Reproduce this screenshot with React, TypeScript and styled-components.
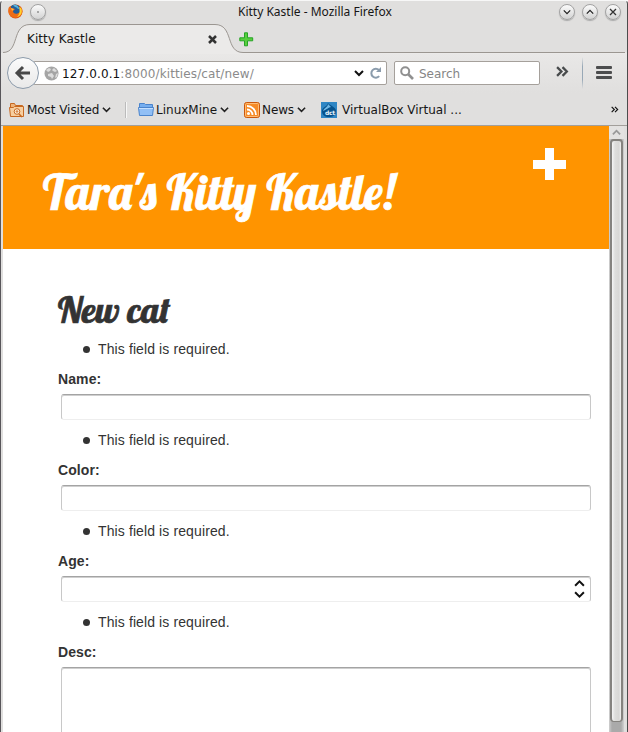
import React from 'react';
import styled, { createGlobalStyle } from 'styled-components';

const GlobalStyle = createGlobalStyle`
  * { box-sizing: border-box; }
  body { margin: 0; background: #fff; overflow: hidden; }
`;

const Window = styled.div`
  width: 628px;
  height: 732px;
  display: flex;
  flex-direction: column;
  overflow: hidden;
  background: #e0dfde;
  border-left: 1px solid #58565a;
  border-right: 1px solid #4c4c4c;
  border-top: 1px solid #f7f7f7;
  border-radius: 4px 4px 0 0;
  font: 12px 'DejaVu Sans', sans-serif;
  color: #161616;
`;

const TitleBar = styled.header`
  height: 22px;
  flex: none;
  display: grid;
  grid-template-columns: 22px 180px 1fr 66px;
  align-items: center;
  padding: 0 2px 2px 7px;
`;

const WindowTitle = styled.div`
  grid-column: 3;
  padding: 1px 0 0 28px;
  font: 12px/20px 'Noto Sans', sans-serif;
  white-space: nowrap;
`;

const WindowButtons = styled.div`
  display: flex;
  gap: 7px;
  grid-column: 4;
`;

const RoundButton = styled.button`
  width: 16px;
  height: 16px;
  padding: 0;
  display: grid;
  place-items: center;
  border: 1px solid #a2a2a2;
  border-radius: 50%;
  background: linear-gradient(#fbfbfb, #d3d3d3);
  box-shadow: 0 1px 1px #aaa;
`;

const TabStrip = styled.nav`
  height: 30px;
  flex: none;
  display: flex;
  position: relative;
`;

const TabOutline = styled.svg`
  position: absolute;
  left: 0;
  top: 0;
`;

const Tab = styled.div`
  width: 236px;
  position: relative;
  padding: 9px 20px 0 26px;
  display: flex;
  justify-content: space-between;
  line-height: 15px;
`;

const TabLabel = styled.span<{ $spacing: number }>`
  letter-spacing: ${p => p.$spacing}px;
`;

const CloseIcon = styled.svg`
  margin-top: 3px;
`;

const AddIcon = styled.svg`
  position: relative;
  margin: 9px 0 0 2px;
`;

const Toolbar = styled.div`
  height: 40px;
  flex: none;
  display: flex;
  align-items: center;
  padding: 0 14px 0 6px;
  background: linear-gradient(#e9e8e7, #e0dfde);
`;

const BackButton = styled.button`
  position: relative;
  z-index: 1;
  flex: none;
  width: 32px;
  height: 32px;
  padding: 0;
  display: grid;
  place-items: center;
  border: 1px solid #8c9bab;
  border-radius: 50%;
  background: linear-gradient(#fbfbfb, #e9e9e9);
`;

const InputBox = styled.div<{ $width: number; $joined?: boolean }>`
  width: ${p => p.$width}px;
  height: 24px;
  flex: none;
  display: flex;
  align-items: center;
  background: #fff;
  border: 1px solid #a5a09b;
  border-radius: 2px;
  margin-left: ${p => (p.$joined ? -6 : 7)}px;
  padding-left: ${p => (p.$joined ? 10 : 5)}px;
  padding-right: 4px;
`;

const Address = styled.div`
  flex: 1;
  margin: 2px 0 0 3px;
  letter-spacing: 0.12px;
  color: #8b8b8b;
`;

const Host = styled.span`
  color: #111;
`;

const Placeholder = styled.span`
  color: #858585;
  margin: 2px 0 0 5px;
`;

const ToolbarIcon = styled.svg<{ $left?: number }>`
  flex: none;
  margin-left: ${p => p.$left ?? 0}px;
`;

const ToolbarRule = styled.div`
  width: 1px;
  height: 32px;
  margin: 0 13px 0 13px;
  background: linear-gradient(transparent, #98a8b6 30%, #98a8b6 70%, transparent);
`;

const Bookmarks = styled.div`
  height: 33px;
  flex: none;
  display: flex;
  align-items: center;
  padding: 1px 8px 0 8px;
  border-bottom: 1px solid #a29f9b;
`;

const Bookmark = styled.div<{ $width: number }>`
  width: ${p => p.$width}px;
  flex: none;
  display: flex;
  align-items: center;
  white-space: nowrap;
`;

const BookmarkText = styled.span<{ $gap: number; $spacing: number }>`
  margin-left: ${p => p.$gap}px;
  letter-spacing: ${p => p.$spacing}px;
`;

const BookmarkRule = styled.div`
  width: 2px;
  height: 16px;
  border-left: 1px solid #bbb;
  border-right: 1px solid #f7f7f7;
  margin-right: 11px;
`;

const Viewport = styled.div`
  display: flex;
  flex: 1;
  min-height: 0;
  padding: 0 2px;
`;

const Page = styled.main`
  width: 606px;
  background: #fff;
  overflow: hidden;
  color: #333;
  font: 14px/20px 'Liberation Sans', sans-serif;
`;

const Banner = styled.div`
  height: 123px;
  display: flex;
  justify-content: space-between;
  background: #ff9400;
  padding: 22px 43px 0 40px;
`;

const Lettering = styled.h1<{ $size: number }>`
  margin: 0;
  font: 400 ${p => p.$size}px/1.1 Lobster, 'Liberation Serif', serif;
  -webkit-text-stroke: 0.7px currentColor;
  white-space: nowrap;
`;

const BannerTitle = styled(Lettering)`
  padding-top: 18px;
  color: #fff;
`;

const Form = styled.form`
  padding: 40px 18px 0 55px;
`;

const FormTitle = styled(Lettering)`
  height: 50px;
  padding-top: 1px;
`;

const ErrorList = styled.ul`
  margin: 0;
  padding-left: 25px;
  list-style: none;
`;

const ErrorItem = styled.li`
  display: flex;
  align-items: center;
  gap: 8px;
  letter-spacing: 0.11px;

  &::before {
    content: '';
    width: 7px;
    height: 7px;
    border-radius: 50%;
    background: #333;
  }
`;

const Label = styled.label`
  display: block;
  margin: 10px 0 5px;
  font-weight: 700;
  letter-spacing: 0.1px;
`;

const Field = styled.div<{ $height: number }>`
  width: 530px;
  height: ${p => p.$height}px;
  margin: 0 0 10px 3px;
  border: 1px solid #c8c8c8;
  border-top: 1px solid #a4a4a4;
  border-bottom-color: #eee;
  box-shadow: inset 0 1px #cfcfcf;
  border-radius: 3px;
  display: flex;
  justify-content: flex-end;
  align-items: center;
  padding-right: 5px;
`;

const Scrollbar = styled.aside`
  width: 15px;
  display: flex;
  flex-direction: column;
  align-items: center;
  background: linear-gradient(90deg, #d0d0d0, #aaa 3px, #aaa 12px, #d0d0d0);
`;

const ScrollArrow = styled.div`
  width: 100%;
  height: 13px;
  display: grid;
  place-items: center;
  background: #e3e2e1;
`;

const Thumb = styled.div`
  width: 13px;
  height: 583px;
  border: 2px solid #85837f;
  border-bottom-width: 1px;
  border-radius: 4px;
  background: linear-gradient(90deg, #f5f5f5, #dededc 3px, #d8d7d5 7px, #f0f0f0);
`;

function Chevron({ up = false, size = 9, color = '#222', weight = 1.8 }: {
  up?: boolean; size?: number; color?: string; weight?: number;
}) {
  return (
    <svg width={size} height={size} viewBox="0 0 10 10" fill="none" stroke={color} strokeWidth={weight}>
      <path d={up ? 'M1 7l4-4 4 4' : 'M1 3l4 4 4-4'} />
    </svg>
  );
}

function FirefoxIcon() {
  return (
    <svg width="15" height="15" viewBox="0 0 15 15">
      <circle cx="7.5" cy="7.5" r="7" fill="#d9520e" />
      <circle cx="7" cy="5.8" r="5.4" fill="#245e99" />
      <path d="M5 1c3-1 6 1 6 4-2 0-2-2-4-2z" fill="#55b6df" />
      <path d="M1 3l2-1v2l4 1-2 2c0 3 4 4 7 1l1-5c2 3 2 7-1 9-4 3-9 2-11-2-1-3-1-5 0-7z" fill="#ef6d16" />
      <path d="M11 3l2 1c2 4 0 8-4 9 3-3 3-6 2-10z" fill="#ffd12d" />
      <path d="M3 4l3 1-2 2z" fill="#ffbb43" />
    </svg>
  );
}

function GlobeIcon() {
  return (
    <svg width="15" height="15" viewBox="0 0 15 15">
      <circle cx="7.5" cy="7.5" r="7" fill="#a5a5a5" />
      <path d="M2 4l3-2 2 1-1 2-2 1zM8 4l2-2 3 3-2 1-2-1zM4 8l4-1 2 3-2 3-1-2-3-1zM12 8l2-1-1 4-2 1z" fill="#ddd" />
    </svg>
  );
}

function FolderIcon({ visited = false }: { visited?: boolean }) {
  if (visited) {
    return (
      <svg width="16" height="16" viewBox="0 0 16 16" fill="none" stroke="#c76820">
        <path d="M1.5 11V1.5h4l1 2h7v3" fill="#efb47a" />
        <path d="M.5 5.5h4l1-1h9v10h-13z" fill="#f7cfa0" />
        <circle cx="8" cy="9.5" r="2.8" fill="#fff2df" />
        <circle cx="8" cy="9.5" r=".8" />
        <path d="M10 12l3 3" strokeWidth="1.5" />
      </svg>
    );
  }
  return (
    <svg width="16" height="16" viewBox="0 0 16 16" fill="none" stroke="#4b84cc">
      <path d="M1.5 8V1.5h5l1 1h7V8" fill="#75aef0" />
      <path d="M.5 5.5h15l-1 8h-13z" fill="#91bff5" />
      <path d="M1 6.5h14" stroke="#c5e0ff" />
    </svg>
  );
}

function FeedIcon() {
  return (
    <svg width="16" height="16" viewBox="0 0 16 16">
      <rect x=".5" y=".5" width="15" height="15" rx="2" fill="#f68b27" stroke="#ca570b" />
      <rect x="1.5" y="1.5" width="13" height="13" rx="1" fill="none" stroke="#ffbc75" />
      <circle cx="4.5" cy="11.5" r="1.5" fill="#fff" />
      <path d="M3 7.5a5.5 5.5 0 0 1 5.5 5.5M3 4a9 9 0 0 1 9 9" fill="none" stroke="#fff" strokeWidth="1.8" />
    </svg>
  );
}

const BadgeText = styled.text`
  font: 700 6px 'DejaVu Sans', sans-serif;
  fill: #e8f4fc;
`;

function DctIcon() {
  return (
    <svg width="16" height="16" viewBox="0 0 16 16">
      <path fill="#2e86c4" d="M0 0h16v16H0z" />
      <path d="M7 1c1 2 8 4 8 8 0 4-3 6-7 6s-7-2-7-6c0-4 5-4 6-8z" fill="#07538d" />
      <path d="M7 2c0 3-4 4-5 7 3-1 6-4 8-4z" fill="#70b9e7" />
      <BadgeText x="4" y="13" textLength="10">dct</BadgeText>
    </svg>
  );
}

function DoubleChevron({ size, color = '#484b4c' }: { size: number; color?: string }) {
  return (
    <svg width={size} height={size} viewBox="0 0 12 12" fill="none" stroke={color} strokeWidth={size > 10 ? 2.1 : 1.7}>
      <path d="M1 2l4 4-4 4M6 2l4 4-4 4" />
    </svg>
  );
}

const fields = [
  { label: 'Name:', height: 26 },
  { label: 'Color:', height: 26 },
  { label: 'Age:', height: 26, stepper: true },
  { label: 'Desc:', height: 100 },
];

const Stepper = styled.div`
  display: flex;
  flex-direction: column;
`;

export default function App() {
  return (
    <>
      <GlobalStyle />
      <Window>
        <TitleBar>
          <FirefoxIcon />
          <RoundButton><svg width="2" height="2"><circle cx="1" cy="1" r=".8" fill="#555" /></svg></RoundButton>
          <WindowTitle>Kitty Kastle - Mozilla Firefox</WindowTitle>
          <WindowButtons>
            <RoundButton><Chevron size={8} weight={1.6} /></RoundButton>
            <RoundButton><Chevron size={8} weight={1.6} up /></RoundButton>
            <RoundButton><svg width="8" height="8" stroke="#333" strokeWidth="1.3"><path d="M1 1l6 6M7 1L1 7" /></svg></RoundButton>
          </WindowButtons>
        </TitleBar>
        <TabStrip>
          <TabOutline width="626" height="31" viewBox="0 0 626 31" fill="none">
            <path d="M2 29.5C19 29.5 10 1.5 29 1.5h185c19 0 10 28 28 28h384V31H2z" fill="#ebeae9" />
            <path d="M2 29.5C19 29.5 10 1.5 29 1.5h185c19 0 10 28 28 28h382" stroke="#9b9691" />
          </TabOutline>
          <Tab>
            <TabLabel $spacing={0.03}>Kitty Kastle</TabLabel>
            <CloseIcon width="9" height="9" viewBox="0 0 9 9" stroke="#333" strokeWidth="2.5"><path d="M1 1l7 7M8 1L1 8" /></CloseIcon>
          </Tab>
          <AddIcon width="15" height="15" viewBox="0 0 15 15"><path d="M5.5.8h3v5h5.2v3H8.5v5h-3v-5H.8v-3h4.7z" fill="#58ce3f" stroke="#25a425" /></AddIcon>
        </TabStrip>
        <Toolbar>
          <BackButton><svg width="18" height="18" fill="none" stroke="#484848" strokeWidth="3"><path d="M9 3L3 9l6 6M4 9h12" /></svg></BackButton>
          <InputBox $width={354} $joined>
            <GlobeIcon />
            <Address><Host>127.0.0.1</Host>:8000/kitties/cat/new/</Address>
            <Chevron size={10} color="#111" weight={2} />
            <ToolbarIcon $left={6} width="12" height="12" fill="none" stroke="#8b9cac" strokeWidth="2"><path d="M9.2 9.2A4.5 4.5 0 1 1 9 3" /><path d="M11 0v5H6z" fill="#8b9cac" stroke="none" /></ToolbarIcon>
          </InputBox>
          <InputBox $width={146}>
            <svg width="14" height="14" fill="none" stroke="#909090" strokeWidth="2"><circle cx="5.2" cy="5.2" r="4" /><path d="M8 8l5 5" strokeWidth="2.6" /></svg>
            <Placeholder>Search</Placeholder>
          </InputBox>
          <ToolbarIcon as="span" $left={16}><DoubleChevron size={13} /></ToolbarIcon>
          <ToolbarRule />
          <svg width="16" height="14" fill="#4c4d4e"><rect width="16" height="3" rx="1" /><rect y="5" width="16" height="3" rx="1" /><rect y="10" width="16" height="3" rx="1" /></svg>
        </Toolbar>
        <Bookmarks>
          <Bookmark $width={116}><FolderIcon visited /><BookmarkText $gap={2} $spacing={-0.05}>Most Visited</BookmarkText><ToolbarIcon as="span" $left={3}><Chevron /></ToolbarIcon></Bookmark>
          <BookmarkRule />
          <Bookmark $width={106}><FolderIcon /><BookmarkText $gap={2} $spacing={0}>LinuxMine</BookmarkText><ToolbarIcon as="span" $left={3}><Chevron /></ToolbarIcon></Bookmark>
          <Bookmark $width={77}><FeedIcon /><BookmarkText $gap={2} $spacing={-0.1}>News</BookmarkText><ToolbarIcon as="span" $left={3}><Chevron /></ToolbarIcon></Bookmark>
          <Bookmark $width={290}><DctIcon /><BookmarkText $gap={5} $spacing={0}>VirtualBox Virtual ...</BookmarkText></Bookmark>
          <DoubleChevron size={9} color="#111" />
        </Bookmarks>
        <Viewport>
          <Page>
            <Banner>
              <BannerTitle $size={48}>Tara's Kitty Kastle!</BannerTitle>
              <svg width="33" height="32" fill="#fff"><path d="M12 0h9v12h12v9H21v11h-9V21H0v-9h12z" /></svg>
            </Banner>
            <Form>
              <FormTitle as="h2" $size={36}>New cat</FormTitle>
              {fields.map(field => (
                <React.Fragment key={field.label}>
                  <ErrorList><ErrorItem>This field is required.</ErrorItem></ErrorList>
                  <Label>{field.label}</Label>
                  <Field $height={field.height}>
                    {field.stepper && <Stepper><Chevron up size={11} color="#111" /><Chevron size={11} color="#111" /></Stepper>}
                  </Field>
                </React.Fragment>
              ))}
            </Form>
          </Page>
          <Scrollbar>
            <ScrollArrow><Chevron up color="#999" weight={2} /></ScrollArrow>
            <Thumb />
          </Scrollbar>
        </Viewport>
      </Window>
    </>
  );
}
